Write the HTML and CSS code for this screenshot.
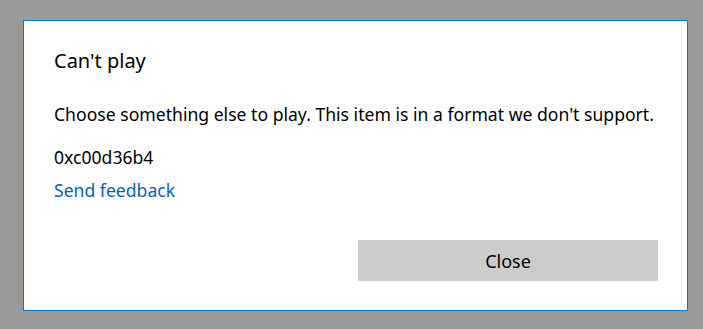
FILE: index.html
```html
<!DOCTYPE html>
<html>
<head>
<meta charset="utf-8">
<link rel="stylesheet" href="styles.css">
</head>
<body>
<div class="dialog">
  <h1 class="title">Can't play</h1>
  <p class="message">Choose something else to play. This item is in a format we don't support.</p>
  <p class="code">0xc00d36b4</p>
  <a class="link" href="#">Send feedback</a>
  <div class="actions">
    <button class="btn">Close</button>
  </div>
</div>
</body>
</html>
```
FILE: styles.css
```css
html, body {
  margin: 0;
  padding: 0;
  background: #999999;
  height: 100%;
}
body {
  font-family: "Noto Sans", "Open Sans", sans-serif;
  color: #000;
  padding: 20px 0 0 23px;
  box-sizing: border-box;
}
.dialog {
  width: 665px;
  height: 291px;
  box-sizing: border-box;
  background: #fff;
  border: 1px solid #0078d7;
  padding: 0 29px 0 30px;
  display: flex;
  flex-direction: column;
}
.title {
  margin: 26px 0 0;
  font-size: 20px;
  font-weight: normal;
  line-height: 28px;
}
.message {
  margin: 27px 0 0;
  font-size: 17.6px;
  line-height: 24px;
  white-space: nowrap;
}
.code {
  margin: 19px 0 0;
  font-size: 17.6px;
  line-height: 24px;
}
.link {
  margin-top: 9px;
  font-size: 17.6px;
  line-height: 24px;
  color: #0063b1;
  text-decoration: none;
  align-self: flex-start;
}
.actions {
  margin-top: auto;
  margin-bottom: 29px;
  display: flex;
  justify-content: flex-end;
}
.btn {
  width: 300px;
  height: 41px;
  border: none;
  background: #cccccc;
  font-family: inherit;
  font-size: 18px;
  color: #000;
  padding: 0;
}
```
